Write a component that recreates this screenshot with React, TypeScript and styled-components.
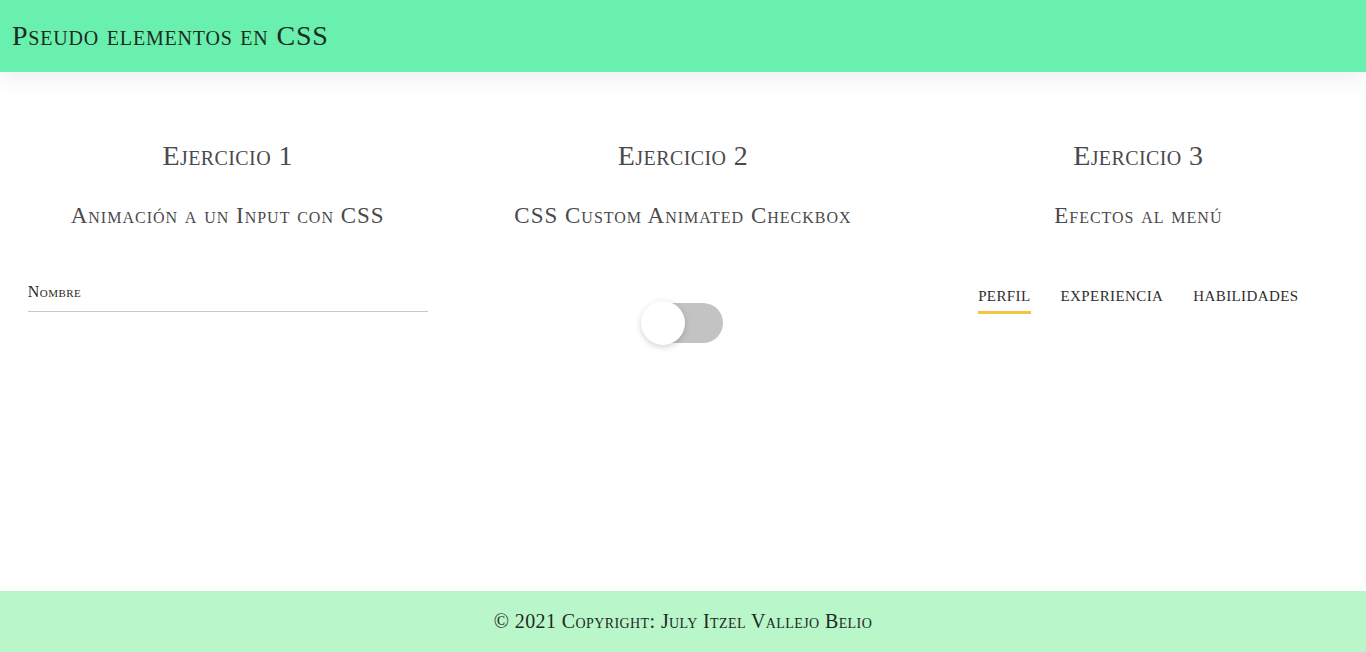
import React from "react";
import styled, { createGlobalStyle } from "styled-components";

const Global = createGlobalStyle`
  html, body { margin: 0; padding: 0; background: #ffffff; }
  body { font-family: "Liberation Serif", "DejaVu Serif", serif; }
  * { box-sizing: border-box; }
`;

const Page = styled.div`
  min-height: 100vh;
  display: flex;
  flex-direction: column;
`;

const Header = styled.header`
  position: relative;
  z-index: 2;
  height: 72px;
  background: #69f0ae;
  display: flex;
  align-items: center;
  padding-left: 12px;
  box-shadow: 0 6px 22px rgba(0, 0, 0, 0.07);
`;

const Title = styled.h1`
  margin: 0;
  font-size: 28px;
  letter-spacing: 0.8px;
  font-weight: normal;
  font-variant: small-caps;
  color: #1d2b23;
  line-height: 1;
`;

const Main = styled.main`
  flex: 1;
  display: grid;
  grid-template-columns: repeat(3, 1fr);
  padding-top: 64px;
`;

const Column = styled.section`
  display: flex;
  flex-direction: column;
  align-items: center;
`;

const ExTitle = styled.h2`
  margin: 0;
  font-size: 28px;
  letter-spacing: 0.4px;
  line-height: 40px;
  font-weight: normal;
  font-variant: small-caps;
  color: #4a4a4d;
`;

const ExSubtitle = styled.h3`
  margin: 25px 0 0;
  font-size: 23px;
  letter-spacing: 1px;
  line-height: 30px;
  font-weight: normal;
  font-variant: small-caps;
  color: #4a4a4d;
`;

const Field = styled.div`
  position: relative;
  margin-top: 51px;
  width: 400px;
  height: 30px;
  border-bottom: 1px solid #c9c9c9;
`;

const Input = styled.input`
  width: 100%;
  height: 29px;
  border: none;
  outline: none;
  background: transparent;
  font-family: inherit;
  font-size: 15px;
`;

const FloatLabel = styled.label`
  position: absolute;
  left: 0;
  top: 0;
  line-height: 20px;
  font-size: 16px;
  letter-spacing: 0.5px;
  font-variant: small-caps;
  color: #2a2a2a;
  pointer-events: none;
`;

const Toggle = styled.div`
  position: relative;
  margin-top: 70px;
  width: 80px;
  height: 44px;
  display: flex;
  align-items: center;
`;

const Track = styled.div`
  width: 80px;
  height: 40px;
  border-radius: 20px;
  background: #c3c3c3;
`;

const Knob = styled.div`
  position: absolute;
  left: -2px;
  top: 0;
  width: 44px;
  height: 44px;
  border-radius: 50%;
  background: #ffffff;
  box-shadow: 0 2px 6px rgba(0, 0, 0, 0.18);
`;

const Menu = styled.nav`
  margin-top: 55px;
  display: flex;
  gap: 30px;
`;

const MenuItem = styled.a<{ $active?: boolean }>`
  display: block;
  font-size: 15px;
  line-height: 20px;
  letter-spacing: 0.4px;
  text-transform: uppercase;
  color: #2e2e2e;
  text-decoration: none;
  padding-bottom: 5px;
  border-bottom: 3px solid ${(p) => (p.$active ? "#f5c542" : "transparent")};
`;

const Footer = styled.footer`
  height: 61px;
  background: #b9f6ca;
  display: flex;
  align-items: center;
  justify-content: center;
`;

const FooterText = styled.p`
  margin: 0;
  font-size: 20px;
  letter-spacing: 0.4px;
  font-variant: small-caps;
  color: #1d2b23;
`;

export default function App() {
  return (
    <>
      <Global />
      <Page>
        <Header>
          <Title>Pseudo elementos en CSS</Title>
        </Header>
        <Main>
          <Column>
            <ExTitle>Ejercicio 1</ExTitle>
            <ExSubtitle>Animación a un Input con CSS</ExSubtitle>
            <Field>
              <Input id="nombre" type="text" />
              <FloatLabel htmlFor="nombre">Nombre</FloatLabel>
            </Field>
          </Column>
          <Column>
            <ExTitle>Ejercicio 2</ExTitle>
            <ExSubtitle>CSS Custom Animated Checkbox</ExSubtitle>
            <Toggle>
              <Track />
              <Knob />
            </Toggle>
          </Column>
          <Column>
            <ExTitle>Ejercicio 3</ExTitle>
            <ExSubtitle>Efectos al menú</ExSubtitle>
            <Menu>
              <MenuItem $active href="#">Perfil</MenuItem>
              <MenuItem href="#">Experiencia</MenuItem>
              <MenuItem href="#">Habilidades</MenuItem>
            </Menu>
          </Column>
        </Main>
        <Footer>
          <FooterText>© 2021 Copyright: July Itzel Vallejo Belio</FooterText>
        </Footer>
      </Page>
    </>
  );
}
